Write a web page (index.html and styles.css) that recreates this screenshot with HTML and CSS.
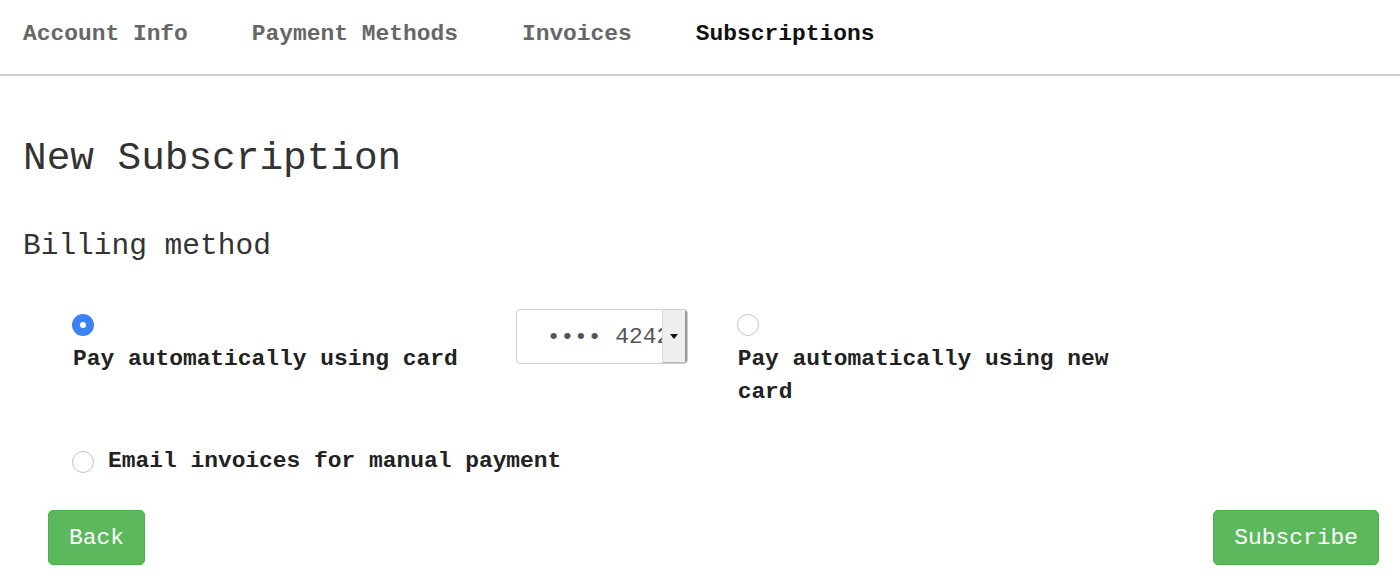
FILE: index.html
```html
<!DOCTYPE html>
<html>
<head>
<meta charset="utf-8">
<link rel="stylesheet" href="styles.css">
</head>
<body>
<nav class="tabs">
  <a class="tab">Account Info</a>
  <a class="tab">Payment Methods</a>
  <a class="tab">Invoices</a>
  <a class="tab active">Subscriptions</a>
</nav>
<main class="content">
  <h1 class="title">New Subscription</h1>
  <h2 class="subtitle">Billing method</h2>
  <div class="options">
    <div class="row-first">
      <label class="opt opt-card">
        <input type="radio" name="billing" class="radio" checked>
        <span class="opt-label">Pay automatically using card</span>
      </label>
      <div class="select">
        <span class="select-text">•••• 4242</span>
        <span class="select-arrow"><span class="tri"></span></span>
      </div>
      <label class="opt opt-new">
        <input type="radio" name="billing" class="radio">
        <span class="opt-label">Pay automatically using new card</span>
      </label>
    </div>
    <label class="opt-inline">
      <input type="radio" name="billing" class="radio">
      <span class="opt-label">Email invoices for manual payment</span>
    </label>
  </div>
  <div class="actions">
    <button class="btn">Back</button>
    <button class="btn">Subscribe</button>
  </div>
</main>
</body>
</html>
```
FILE: styles.css
```css
html, body {
  margin: 0;
  padding: 0;
  background: #fff;
}
body {
  font-family: "Liberation Mono", "Courier New", monospace;
  font-size: 22.9px;
  color: #333;
}
.tabs {
  display: flex;
  gap: 64px;
  padding: 21px 23px 27px;
  border-bottom: 2px solid #d0d0d0;
}
.tab {
  font-weight: bold;
  line-height: 26px;
  color: #666;
  text-decoration: none;
}
.tab.active {
  color: #111;
}
.content {
  padding: 0 21px 0 23px;
}
.title {
  margin: 60px 0 0;
  font-size: 39.4px;
  line-height: 46px;
  font-weight: normal;
  color: #333;
}
.subtitle {
  margin: 46px 0 0;
  font-size: 29.5px;
  line-height: 36px;
  font-weight: normal;
  color: #333;
}
.options {
  margin-top: 45px;
  padding-left: 49px;
}
.row-first {
  display: flex;
  align-items: flex-start;
}
.opt {
  display: flex;
  flex-direction: column;
  align-items: flex-start;
  padding-top: 5px;
}
.opt-label {
  font-weight: bold;
  line-height: 33px;
  color: #222;
}
.opt .opt-label {
  margin-top: 7px;
  margin-left: 1px;
}
.opt-new {
  width: 420px;
  margin-left: 49px;
}
.radio {
  appearance: none;
  -webkit-appearance: none;
  margin: 0;
  width: 22px;
  height: 22px;
  border-radius: 50%;
  border: 1px solid #c4c4c4;
  background: #fff;
  box-sizing: border-box;
  flex: none;
}
.radio:checked {
  border: 8px solid #3b82f6;
  background: #fff;
}
.select {
  position: relative;
  margin-left: 58px;
  width: 172px;
  height: 55px;
  box-sizing: border-box;
  border: 1px solid #cfcfcf;
  border-radius: 4px;
  overflow: hidden;
  display: flex;
  align-items: center;
  padding-left: 30px;
  background: #fff;
}
.select-text {
  white-space: nowrap;
  color: #555;
  font-size: 22.9px;
}
.select-arrow {
  position: absolute;
  top: 0;
  right: 0;
  width: 22px;
  height: 52px;
  background: #efefef;
  border-left: 1px solid #d8d8d8;
  border-right: 2px solid #9a9a9a;
  border-bottom: 2px solid #b5b5b5;
  display: flex;
  align-items: center;
  justify-content: center;
}
.tri {
  width: 0;
  height: 0;
  border-left: 4px solid transparent;
  border-right: 4px solid transparent;
  border-top: 5px solid #111;
}
.opt-inline {
  display: flex;
  align-items: center;
  gap: 14px;
  margin-top: 36px;
}
.actions {
  display: flex;
  justify-content: space-between;
  margin-top: 32px;
  padding-left: 25px;
}
.btn {
  font-family: "Liberation Mono", "Courier New", monospace;
  font-size: 22.9px;
  color: #fff;
  background: #5cb85c;
  border: 1px solid #4cae4c;
  border-radius: 5px;
  height: 55px;
  padding: 0 20px;
}
```
